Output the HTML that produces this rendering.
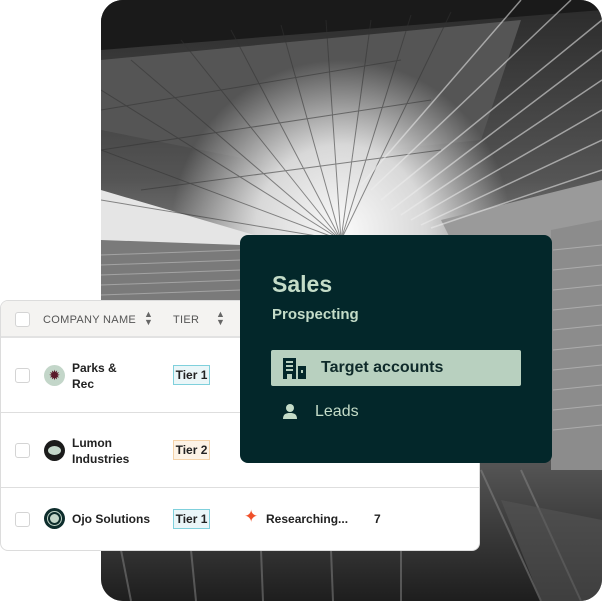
<!DOCTYPE html>
<html><head><style>
*{margin:0;padding:0;box-sizing:border-box}
body{width:602px;height:601px;background:#fff;position:relative;overflow:hidden;font-family:"Liberation Sans",sans-serif}
.photo{position:absolute;left:101px;top:0;width:501px;height:601px;border-radius:22px;overflow:hidden;background:#6d6d6d}
.table{position:absolute;left:0;top:300px;width:480px;height:251px;background:#fff;border:1px solid #dcdcdc;border-radius:8px;overflow:hidden}
.hdr{height:37px;background:#f4f3f1;border-bottom:2px solid #e2e2e2;position:relative;font-size:11px;color:#555;letter-spacing:.3px}
.cb{position:absolute;left:14px;width:15px;height:15px;border:1px solid #d4d4d4;border-radius:3px;background:#fff}
.row{position:relative;height:75px;border-bottom:1px solid #dedede}
.name{position:absolute;left:71px;font-size:12px;font-weight:bold;color:#222;line-height:16px}
.tier{position:absolute;left:172px;width:37px;height:20px;border:1px solid #7fd0dc;background:#eaf6f8;font-size:12px;font-weight:bold;color:#222;text-align:center;line-height:18px}
.ic{position:absolute;left:43px;width:21px;height:21px;border-radius:50%}
.panel{position:absolute;left:240px;top:235px;width:312px;height:228px;background:#03272a;border-radius:8px}
</style></head><body>
<div class="photo">
<svg width="501" height="601" viewBox="0 0 501 601">
<defs>
<linearGradient id="g1" x1="0" y1="0" x2="0" y2="1"><stop offset="0" stop-color="#2a2a2a"/><stop offset=".3" stop-color="#555"/><stop offset=".45" stop-color="#8a8a8a"/><stop offset=".75" stop-color="#5a5a5a"/><stop offset="1" stop-color="#1e1e1e"/></linearGradient>
<radialGradient id="g2" cx="240" cy="230" r="170" gradientUnits="userSpaceOnUse"><stop offset="0" stop-color="#fafafa"/><stop offset=".5" stop-color="#d8d8d8"/><stop offset="1" stop-color="#d8d8d8" stop-opacity="0"/></radialGradient>
</defs>
<rect width="501" height="601" fill="url(#g1)"/>
<polygon points="0,0 501,0 501,10 0,50" fill="#1a1a1a"/>
<polygon points="0,60 420,20 380,140 280,150 200,170 0,130" fill="#555"/>
<rect width="501" height="300" fill="url(#g2)"/>
<polygon points="0,190 170,240 140,250 0,245" fill="#e5e5e5"/>
<polygon points="0,240 140,245 140,300 0,300" fill="#7a7a7a"/>
<polygon points="340,220 501,180 501,300 380,300" fill="#9a9a9a"/>
<polygon points="450,230 501,220 501,470 450,470" fill="#8c8c8c"/>
<g stroke="#333" stroke-width="1" opacity=".55">
<line x1="240" y1="240" x2="0" y2="90"/><line x1="240" y1="240" x2="30" y2="60"/><line x1="240" y1="240" x2="80" y2="40"/><line x1="240" y1="240" x2="130" y2="30"/><line x1="240" y1="240" x2="180" y2="25"/><line x1="240" y1="240" x2="225" y2="20"/><line x1="240" y1="240" x2="270" y2="20"/><line x1="240" y1="240" x2="310" y2="15"/><line x1="240" y1="240" x2="350" y2="12"/><line x1="240" y1="240" x2="0" y2="150"/><line x1="240" y1="240" x2="0" y2="200"/>
<line x1="0" y1="110" x2="300" y2="60"/><line x1="0" y1="150" x2="330" y2="100"/><line x1="40" y1="190" x2="340" y2="150"/>
</g>
<g stroke="#eee" stroke-width="1.5" opacity=".55">
<line x1="280" y1="200" x2="501" y2="20"/><line x1="290" y1="210" x2="501" y2="50"/><line x1="300" y1="215" x2="501" y2="80"/><line x1="310" y1="220" x2="501" y2="110"/><line x1="320" y1="225" x2="501" y2="140"/><line x1="330" y1="228" x2="501" y2="170"/><line x1="270" y1="190" x2="470" y2="0"/><line x1="260" y1="185" x2="420" y2="0"/>
</g>
<g stroke="#ccc" stroke-width="1" opacity=".5">
<line x1="0" y1="255" x2="140" y2="250"/><line x1="0" y1="265" x2="140" y2="260"/><line x1="0" y1="275" x2="140" y2="270"/><line x1="0" y1="285" x2="140" y2="280"/><line x1="0" y1="295" x2="140" y2="290"/>
<line x1="452" y1="250" x2="501" y2="245"/><line x1="452" y1="270" x2="501" y2="265"/><line x1="452" y1="290" x2="501" y2="285"/><line x1="452" y1="310" x2="501" y2="305"/><line x1="452" y1="330" x2="501" y2="325"/><line x1="452" y1="350" x2="501" y2="345"/><line x1="452" y1="370" x2="501" y2="365"/><line x1="452" y1="390" x2="501" y2="385"/><line x1="452" y1="410" x2="501" y2="405"/><line x1="452" y1="430" x2="501" y2="425"/>
</g>
<g stroke="#888" stroke-width="2" opacity=".5">
<line x1="20" y1="550" x2="30" y2="601"/><line x1="90" y1="550" x2="95" y2="601"/><line x1="160" y1="550" x2="162" y2="601"/><line x1="230" y1="550" x2="232" y2="601"/><line x1="300" y1="550" x2="300" y2="601"/><line x1="380" y1="470" x2="440" y2="601"/><line x1="420" y1="470" x2="480" y2="601"/>
</g>
<polygon points="400,500 501,520 501,601 440,601" fill="#555" opacity=".6"/>
</svg>
</div>
<div class="table">
<div class="hdr"><div class="cb" style="top:11px"></div>
<span style="position:absolute;left:42px;top:13px">COMPANY NAME</span>
<span style="position:absolute;left:143px;top:9px;font-size:9px;line-height:8px;color:#666">▲<br>▼</span>
<span style="position:absolute;left:172px;top:13px">TIER</span>
<span style="position:absolute;left:215px;top:9px;font-size:9px;line-height:8px;color:#666">▲<br>▼</span></div>
<div class="row"><div class="cb" style="top:30px"></div><div class="ic" style="top:27px;background:#c3d6c9;color:#5a1a2a;font-size:14px;text-align:center;line-height:21px">✹</div><div class="name" style="top:22px">Parks &amp;<br>Rec</div><div class="tier" style="top:27px">Tier 1</div></div>
<div class="row"><div class="cb" style="top:30px"></div><div class="ic" style="top:27px;background:#1b1b1b"><div style="margin:6px 4px;width:13px;height:9px;border-radius:50%;background:#c3d6c9"></div></div><div class="name" style="top:22px">Lumon<br>Industries</div><div class="tier" style="top:27px;border-color:#f4d2a8;background:#fdf3e6">Tier 2</div></div>
<div class="row" style="border:none"><div class="cb" style="top:24px"></div><div class="ic" style="top:20px;background:#0e2d2c"><div style="margin:4px;width:13px;height:13px;border-radius:50%;background:#c3d6c9;border:2px solid #0e2d2c;outline:1px solid #c3d6c9"></div></div><div class="name" style="top:23px">Ojo Solutions</div><div class="tier" style="top:21px">Tier 1</div>
<span style="position:absolute;left:243px;top:19px;color:#f0502a;font-size:17px">✦</span>
<span style="position:absolute;left:265px;top:24px;font-size:12px;font-weight:bold;color:#222">Researching...</span>
<span style="position:absolute;left:373px;top:24px;font-size:12px;font-weight:bold;color:#222">7</span></div>
</div>
<div class="panel">
<div style="position:absolute;left:32px;top:36px;font-size:23px;font-weight:bold;color:#c4dcc8">Sales</div>
<div style="position:absolute;left:32px;top:71px;font-size:15px;font-weight:bold;color:#c4dcc8">Prospecting</div>
<div style="position:absolute;left:31px;top:115px;width:250px;height:36px;background:#b8d0bf;border-radius:2px">
<svg style="position:absolute;left:11px;top:7px" width="25" height="22" viewBox="0 0 25 22"><path d="M1 1h13v21h-4v-5h-5v5H1z" fill="#03272a"/><rect x="4" y="4" width="7" height="2" fill="#b8d0bf"/><rect x="4" y="8" width="7" height="2" fill="#b8d0bf"/><rect x="4" y="12" width="7" height="2" fill="#b8d0bf"/><path d="M16 9h8v13h-8z" fill="#03272a"/><rect x="19" y="13" width="2" height="3" fill="#b8d0bf"/></svg>
<span style="position:absolute;left:50px;top:9px;font-size:16px;font-weight:bold;color:#0f2a2a">Target accounts</span></div>
<svg style="position:absolute;left:43px;top:168px" width="14" height="16" viewBox="0 0 14 16"><circle cx="7" cy="5" r="4" fill="#c4dcc8"/><path d="M0 16c0-5 3-6 7-6s7 1 7 6z" fill="#c4dcc8"/></svg>
<div style="position:absolute;left:75px;top:168px;font-size:16px;color:#c4dcc8">Leads</div>
</div>
</body></html>
